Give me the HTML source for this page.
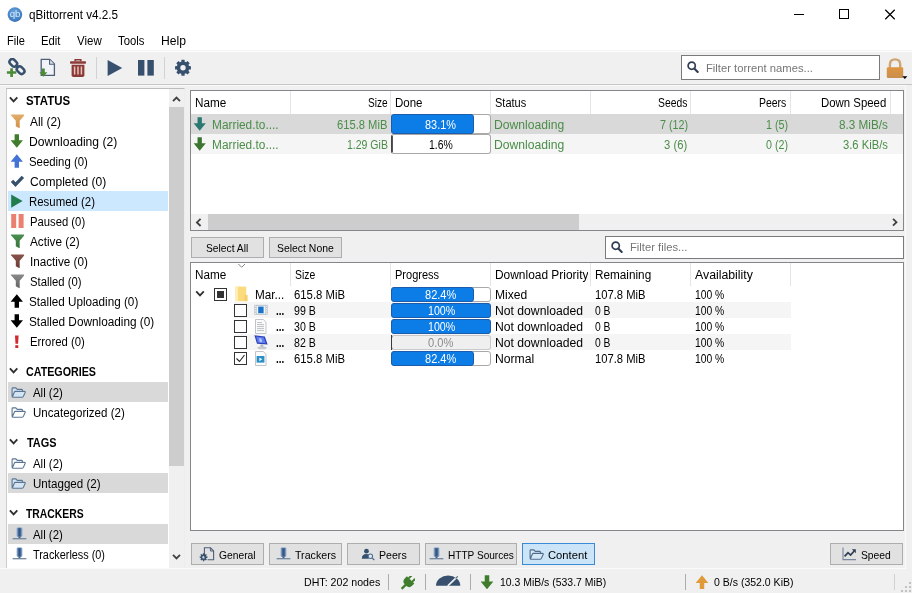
<!DOCTYPE html>
<html lang="en">
<head>
<meta charset="utf-8">
<title>qBittorrent v4.2.5</title>
<style>
html,body{margin:0;padding:0}
body{width:912px;height:593px;overflow:hidden;background:#f0f0f0;position:relative;font-family:"Liberation Sans",sans-serif;color:#000}
div,span,svg{position:absolute;box-sizing:border-box}
#app{left:0;top:0;width:912px;height:593px;will-change:transform}
.x{white-space:nowrap;line-height:16px;height:16px;transform-origin:0 0}
.s{font-size:12px}
.t{font-size:11px}
.b{font-weight:bold}
.clip{overflow:hidden}
#titlebar{left:0;top:0;width:912px;height:51px;background:#fff;border-bottom:1px solid #f3f3f3}
#toolbar{left:0;top:51px;width:912px;height:34px;background:#f0f0f0;border-top:1px solid #fdfdfd;border-bottom:1px solid #c6c6c6}
.tsep{top:57px;width:1px;height:22px;background:#d2d2d2}
#side{left:6px;top:88px;width:179px;height:481px;background:#fff;border:1px solid #cdcdcd;border-top-color:#bdbdbd;border-right-color:#ededed}
.hl{left:8px;width:160px;height:20px;background:#d9d9d9}
.hl.sel{background:#cce8ff}
#vsb{left:169px;top:89px;width:15px;height:479px;background:#f0f0f0}
#vsb i{position:absolute;left:0;top:18px;width:15px;height:359px;background:#cdcdcd}
.panel{background:#fff;border:1px solid #858689}
#main{left:190px;top:90px;width:714px;height:141px}
#files{left:190px;top:262px;width:714px;height:269px}
.hsep{width:1px;background:#e5e5e5}
.row{left:191px;height:20px}
.btn{height:22px;background:#e1e1e1;border:1px solid #adadad}
.btn.on{background:#cce4f7;border-color:#3a8ad6}
.edit{background:#fff;border:1px solid #7a7a7a}
.pb{left:391px;width:100px;border-radius:3px;background:#fff;border:1px solid #a9a9a9}
.pb i{position:absolute;box-sizing:border-box;left:-1px;top:-1px;bottom:-1px;background:#0c7ce6;border:1px solid #1d5cab;border-radius:3px}
.pb.dis{background:#efefef;border-color:#c9c9c9}
.cb{width:13px;height:13px;background:#fff;border:1px solid #333}
.ssep{top:574px;width:1px;height:16px;background:#acacac}
</style>
</head>
<body>
<div id="app">
<!-- title bar + menu -->
<div id="titlebar"></div>
<svg style="left:6px;top:5.5px" width="18" height="18" viewBox="0 0 18 18">
 <defs><radialGradient id="lg" cx="0.45" cy="0.35" r="0.75"><stop offset="0" stop-color="#6aa3dc"/><stop offset="0.65" stop-color="#4583c6"/><stop offset="1" stop-color="#2f63a6"/></radialGradient></defs>
 <circle cx="8.9" cy="8.6" r="7.3" fill="url(#lg)"/>
 <text x="8.9" y="11.3" font-family="Liberation Sans, sans-serif" font-size="9.6" fill="#d6eafb" text-anchor="middle" letter-spacing="-0.1">qb</text>
</svg>
<svg style="left:790px;top:5px" width="110" height="20" viewBox="0 0 110 20" fill="none" stroke="#000" stroke-width="1">
 <path d="M4 9.5h10"/><rect x="49.5" y="4.5" width="9" height="9"/><path d="M95.3 4.800l9.400 9.400M104.700 4.800l-9.400 9.400" stroke-width="1.25"/>
</svg>

<!-- toolbar -->
<div id="toolbar"></div>
<div class="tsep" style="left:96px"></div>
<div class="tsep" style="left:164px"></div>

<!-- sidebar -->
<div id="side"></div>
<div class="hl sel" style="top:191px"></div>
<div class="hl" style="top:382px"></div>
<div class="hl" style="top:473px"></div>
<div class="hl" style="top:524px"></div>
<div id="vsb"><i></i></div>

<!-- main torrent table -->
<div id="main" class="panel"></div>
<div class="row" style="top:114px;width:712px;background:#d9d9d9"></div>
<div class="row" style="top:134px;width:712px;background:#f5f5f5"></div>
<div class="hsep" style="left:290px;top:91px;height:23px"></div>
<div class="hsep" style="left:390px;top:91px;height:23px"></div>
<div class="hsep" style="left:490px;top:91px;height:23px"></div>
<div class="hsep" style="left:590px;top:91px;height:23px"></div>
<div class="hsep" style="left:690px;top:91px;height:23px"></div>
<div class="hsep" style="left:790px;top:91px;height:23px"></div>
<div class="hsep" style="left:890px;top:91px;height:23px"></div>

<div style="left:191px;top:214px;width:712px;height:16px;background:#f0f0f0"></div>
<div style="left:208px;top:214px;width:371px;height:16px;background:#cdcdcd"></div>
<div class="pb" style="top:114px;height:20px"><i style="width:83px"></i></div>
<div class="pb" style="top:134px;height:20px;border-left-color:#444"><i style="left:0;top:1px;bottom:1px;width:1px;background:#555;border:0;border-radius:0"></i></div>

<!-- middle controls -->
<div class="btn" style="left:191px;top:237px;width:73px;height:21px"></div>
<div class="btn" style="left:269px;top:237px;width:73px;height:21px"></div>
<div class="edit" style="left:605px;top:236px;width:299px;height:23px"></div>
<div class="edit" style="left:681px;top:55px;width:199px;height:25px"></div>

<!-- files table -->
<div id="files" class="panel"></div>
<div class="hsep" style="left:290px;top:263px;height:23px"></div>
<div class="hsep" style="left:390px;top:263px;height:23px"></div>
<div class="hsep" style="left:490px;top:263px;height:23px"></div>
<div class="hsep" style="left:590px;top:263px;height:23px"></div>
<div class="hsep" style="left:690px;top:263px;height:23px"></div>
<div class="hsep" style="left:790px;top:263px;height:23px"></div>
<div style="left:234px;top:302px;width:557px;height:16px;background:#f5f5f5"></div>
<div style="left:234px;top:334px;width:557px;height:16px;background:#f5f5f5"></div>
<div class="cb" style="left:214px;top:288px"><div style="left:2px;top:2px;width:7px;height:7px;background:#333"></div></div>
<div class="cb" style="left:234px;top:304px"></div>
<div class="cb" style="left:234px;top:320px"></div>
<div class="cb" style="left:234px;top:336px"></div>
<div class="cb" style="left:234px;top:352px"><svg style="left:0;top:0" width="11" height="11" viewBox="0 0 11 11"><path d="M1.5 5.5l3 3l5-6.5" fill="none" stroke="#222" stroke-width="1.1"/></svg></div>
<div class="pb" style="top:286.5px;height:15px"><i style="width:83px"></i></div>
<div class="pb" style="top:302.5px;height:15px"><i style="width:100px"></i></div>
<div class="pb" style="top:318.5px;height:15px"><i style="width:100px"></i></div>
<div class="pb dis" style="top:334.5px;height:15px;border-left-color:#3a3a3a"><i style="width:1px;background:#3a3a3a;border:0;border-radius:0"></i></div>
<div class="pb" style="top:350.5px;height:15px"><i style="width:83px"></i></div>


<!-- tabs -->
<div class="btn" style="left:191px;top:543px;width:73px"></div>
<div class="btn" style="left:269px;top:543px;width:73px"></div>
<div class="btn" style="left:347px;top:543px;width:73px"></div>
<div class="btn" style="left:425px;top:543px;width:92px"></div>
<div class="btn on" style="left:522px;top:543px;width:73px"></div>
<div class="btn" style="left:830px;top:543px;width:73px"></div>

<!-- status bar -->
<div style="left:0;top:568px;width:906px;height:1px;background:#fafafa"></div>
<div style="left:0;top:85px;width:906px;height:1px;background:#fafafa"></div>
<div style="left:905px;top:85px;width:1px;height:484px;background:#fafafa"></div>
<div class="ssep" style="left:388px"></div>
<div class="ssep" style="left:425px"></div>
<div class="ssep" style="left:470px"></div>
<div class="ssep" style="left:685px"></div>
<div class="ssep" style="left:894px;background:#d0d0d0"></div>

<svg style="left:6px;top:58px" width="20" height="20" viewBox="0 0 20 20">
<g fill="none" stroke="#36506e" stroke-width="2.5">
<rect x="-2.800" y="-4.200" width="5.600" height="8.400" rx="2.800" transform="translate(7.300,4.800) rotate(-45)"/>
<rect x="-2.800" y="-4.200" width="5.600" height="8.400" rx="2.800" transform="translate(14.600,12.200) rotate(-45)"/>
</g>
<path d="M9.400 7l3.200 3.200" stroke="#36506e" stroke-width="2.300"/>
<path d="M0.900 14.500h9.400M5.600 10.200v8.700" stroke="#4b8b36" stroke-width="2.700" fill="none"/></svg>
<svg style="left:38px;top:58px" width="18" height="20" viewBox="0 0 18 20">
<path d="M3.2 1.4h8.6l4.6 4.6v11.4h-13.2z" fill="#f1f3f8" stroke="#4e5e78" stroke-width="1.3" stroke-linejoin="round"/>
<path d="M11.6 1.6v4.6h4.6" fill="#dfe4ee" stroke="#4e5e78" stroke-width="1.1" stroke-linejoin="round"/>
<path d="M4 10.6h2.8v3.6h2.6l-4 4.6l-4-4.6h2.6z" fill="#4b8b36"/>
<path d="M1 17.6h8" stroke="#4b8b36" stroke-width="0"/></svg>
<svg style="left:69px;top:58px" width="18" height="20" viewBox="0 0 18 20">
<path d="M6.2 3.2v-1.4h5.6v1.4" fill="none" stroke="#8a3b37" stroke-width="1.6"/>
<rect x="1" y="3.2" width="16" height="2.6" rx="0.8" fill="#8a3b37"/>
<path d="M2.6 6.8h12.8v10.4q0 1.8-1.8 1.8h-9.2q-1.8 0-1.8-1.8z" fill="#8a3b37"/>
<path d="M5.6 8.6v8M9 8.6v8M12.4 8.6v8" stroke="#e7c2bd" stroke-width="1.5"/></svg>
<svg style="left:106px;top:58px" width="18" height="20" viewBox="0 0 18 20"><path d="M1.6 2v16l14.6-8z" fill="#36506e"/></svg>
<svg style="left:137px;top:58px" width="18" height="20" viewBox="0 0 18 20"><rect x="1" y="2" width="6.4" height="15.6" fill="#36506e"/><rect x="10.4" y="2" width="6.4" height="15.6" fill="#36506e"/></svg>
<svg style="left:174px;top:58px" width="18" height="20" viewBox="0 0 18 20"><path d="M15.06 8.09 L16.94 8.22 L16.94 11.38 L15.06 11.51 L14.50 12.88 L15.73 14.30 L13.50 16.53 L12.08 15.30 L10.71 15.86 L10.58 17.74 L7.42 17.74 L7.29 15.86 L5.92 15.30 L4.50 16.53 L2.27 14.30 L3.50 12.88 L2.94 11.51 L1.06 11.38 L1.06 8.22 L2.94 8.09 L3.50 6.72 L2.27 5.30 L4.50 3.07 L5.92 4.30 L7.29 3.74 L7.42 1.86 L10.58 1.86 L10.71 3.74 L12.08 4.30 L13.50 3.07 L15.73 5.30 L14.50 6.72Z M11.70 9.80 A2.7 2.7 0 1 0 6.30 9.80 A2.7 2.7 0 1 0 11.70 9.80Z" fill="#36506e" fill-rule="evenodd"/></svg>
<svg style="left:687.2px;top:61px" width="12" height="13" viewBox="0 0 12 13"><circle cx="4.700" cy="4.700" r="3.600" fill="none" stroke="#303e54" stroke-width="1.700"/><path d="M7.300 7.500l3.400 3.500" stroke="#303e54" stroke-width="2.100" stroke-linecap="round"/></svg>
<svg style="left:611.2px;top:240.8px" width="12" height="13" viewBox="0 0 12 13"><circle cx="4.700" cy="4.700" r="3.600" fill="none" stroke="#303e54" stroke-width="1.700"/><path d="M7.300 7.500l3.400 3.500" stroke="#303e54" stroke-width="2.100" stroke-linecap="round"/></svg>
<svg style="left:885px;top:56px" width="26" height="24" viewBox="0 0 26 24"><defs><linearGradient id="lk" x1="0" y1="0" x2="0" y2="1"><stop offset="0" stop-color="#df9540"/><stop offset="1" stop-color="#c98f50"/></linearGradient></defs>
<path d="M4.900 12v-3.500q0-5.100 5.150-5.100t5.150 5.100v3.500" fill="none" stroke="#cda673" stroke-width="2.400"/>
<rect x="1.800" y="11.300" width="16.400" height="10.600" rx="1.200" fill="url(#lk)"/>
<path d="M17.200 20.200h5.200l-2.600 2.900z" fill="#000"/></svg>
<svg style="left:9px;top:96.2px" width="10" height="8" viewBox="0 0 10 8"><path d="M0.900 1.300l3.700 4l3.700-4" fill="none" stroke="#303030" stroke-width="1.900"/></svg>
<svg style="left:9px;top:367.3px" width="10" height="8" viewBox="0 0 10 8"><path d="M0.900 1.300l3.700 4l3.700-4" fill="none" stroke="#303030" stroke-width="1.900"/></svg>
<svg style="left:9px;top:438.3px" width="10" height="8" viewBox="0 0 10 8"><path d="M0.900 1.300l3.700 4l3.700-4" fill="none" stroke="#303030" stroke-width="1.900"/></svg>
<svg style="left:9px;top:509.40000000000003px" width="10" height="8" viewBox="0 0 10 8"><path d="M0.900 1.300l3.700 4l3.700-4" fill="none" stroke="#303030" stroke-width="1.900"/></svg>
<svg style="left:10px;top:113.6px" width="15" height="14.6" viewBox="0 0 15 14.6"><defs><linearGradient id="f113" x1="0" y1="0" x2="0" y2="1"><stop offset="0" stop-color="#e3ad6a"/><stop offset="1" stop-color="#cf8f48"/></linearGradient></defs>
<path d="M0.800 1.100q0-.7.700-.7h12q.7 0 .7.700q0 .5-.4 1l-4.100 4.700v7.600l-3.900-2.200v-5.400l-4.100-4.700q-.9-.5-.9-1z" fill="url(#f113)"/></svg>
<svg style="left:10.2px;top:133.6px" width="13.6" height="14" viewBox="0 0 13 14" preserveAspectRatio="none"><path d="M4.4 0.300h4.200v6h3.800l-5.900 7.400l-5.900-7.400h3.800z" fill="#3f7d2c"/></svg>
<svg style="left:10.2px;top:153.6px" width="13.6" height="14" viewBox="0 0 13 14" preserveAspectRatio="none"><path transform="translate(0,14) scale(1,-1)" d="M4.4 0.300h4.200v6h3.800l-5.900 7.400l-5.900-7.400h3.800z" fill="#4373d4"/></svg>
<svg style="left:10px;top:174px" width="15" height="14" viewBox="0 0 15 14"><path d="M2 6.800l3.500 3.800l7.400-7.800" fill="none" stroke="#36506e" stroke-width="3.300"/></svg>
<svg style="left:10px;top:194px" width="14" height="15" viewBox="0 0 14 15"><path d="M1.200 0.400v13.400l11.400-6.700z" fill="#217c4e"/></svg>
<svg style="left:10px;top:213px" width="15" height="16" viewBox="0 0 15 16"><rect x="1.200" y="1" width="5" height="14" fill="#ea806f"/><rect x="8.600" y="1" width="5" height="14" fill="#ea806f"/></svg>
<svg style="left:10px;top:233.6px" width="15" height="14.6" viewBox="0 0 15 14.6"><defs><linearGradient id="f233" x1="0" y1="0" x2="0" y2="1"><stop offset="0" stop-color="#4a8f50"/><stop offset="1" stop-color="#37733d"/></linearGradient></defs>
<path d="M0.800 1.100q0-.7.700-.7h12q.7 0 .7.700q0 .5-.4 1l-4.100 4.700v7.600l-3.900-2.200v-5.400l-4.100-4.700q-.9-.5-.9-1z" fill="url(#f233)"/></svg>
<svg style="left:10px;top:253.6px" width="15" height="14.6" viewBox="0 0 15 14.6"><defs><linearGradient id="f253" x1="0" y1="0" x2="0" y2="1"><stop offset="0" stop-color="#885248"/><stop offset="1" stop-color="#6b3e37"/></linearGradient></defs>
<path d="M0.800 1.100q0-.7.700-.7h12q.7 0 .7.700q0 .5-.4 1l-4.100 4.700v7.600l-3.900-2.200v-5.400l-4.100-4.700q-.9-.5-.9-1z" fill="url(#f253)"/></svg>
<svg style="left:10px;top:273.6px" width="15" height="14.6" viewBox="0 0 15 14.6"><defs><linearGradient id="f273" x1="0" y1="0" x2="0" y2="1"><stop offset="0" stop-color="#8a8a8a"/><stop offset="1" stop-color="#646464"/></linearGradient></defs>
<path d="M0.800 1.100q0-.7.700-.7h12q.7 0 .7.700q0 .5-.4 1l-4.100 4.700v7.600l-3.900-2.200v-5.400l-4.100-4.700q-.9-.5-.9-1z" fill="url(#f273)"/></svg>
<svg style="left:10.2px;top:293.6px" width="13.6" height="14" viewBox="0 0 13 14" preserveAspectRatio="none"><path transform="translate(0,14) scale(1,-1)" d="M4.4 0.300h4.200v6h3.800l-5.900 7.400l-5.900-7.400h3.800z" fill="#000"/></svg>
<svg style="left:10.2px;top:313.6px" width="13.6" height="14" viewBox="0 0 13 14" preserveAspectRatio="none"><path d="M4.4 0.300h4.200v6h3.800l-5.900 7.400l-5.900-7.400h3.800z" fill="#000"/></svg>
<svg style="left:14.2px;top:335px" width="6" height="15" viewBox="0 0 6 15"><path d="M1 0.400h3.600l-.5 8.400h-2.600z" fill="#d02a2e"/><rect x="1.300" y="10.200" width="3" height="2.800" fill="#d02a2e"/></svg>
<svg style="left:11px;top:386.6px" width="16" height="11" viewBox="0 0 16 11"><path d="M1.100 9.300v-7.500q0-.9.900-.9h2.900l1.300 1.500h4.300q.9 0 .9.900v1.100M1.300 10l2-4.800q.3-.8 1.100-.8h9.100q1 0 .7.800l-1.800 4.200q-.3.800-1.100.8h-9.500q-.8 0-.5-.800z" fill="#d3e4f3" stroke="#5a7692" stroke-width="1.100" stroke-linejoin="round"/></svg>
<svg style="left:11px;top:406.6px" width="16" height="11" viewBox="0 0 16 11"><path d="M1.100 9.300v-7.500q0-.9.900-.9h2.900l1.300 1.500h4.300q.9 0 .9.900v1.100M1.300 10l2-4.800q.3-.8 1.100-.8h9.100q1 0 .7.800l-1.800 4.200q-.3.800-1.100.8h-9.500q-.8 0-.5-.800z" fill="#fff" stroke="#5a7692" stroke-width="1.100" stroke-linejoin="round"/></svg>
<svg style="left:11px;top:457.6px" width="16" height="11" viewBox="0 0 16 11"><path d="M1.100 9.300v-7.500q0-.9.900-.9h2.900l1.300 1.500h4.300q.9 0 .9.900v1.100M1.300 10l2-4.800q.3-.8 1.100-.8h9.100q1 0 .7.800l-1.800 4.200q-.3.800-1.100.8h-9.500q-.8 0-.5-.800z" fill="#fff" stroke="#5a7692" stroke-width="1.100" stroke-linejoin="round"/></svg>
<svg style="left:11px;top:477.6px" width="16" height="11" viewBox="0 0 16 11"><path d="M1.100 9.300v-7.500q0-.9.900-.9h2.900l1.300 1.500h4.300q.9 0 .9.900v1.100M1.300 10l2-4.800q.3-.8 1.100-.8h9.100q1 0 .7.800l-1.800 4.200q-.3.800-1.100.8h-9.500q-.8 0-.5-.800z" fill="#d3e4f3" stroke="#5a7692" stroke-width="1.100" stroke-linejoin="round"/></svg>
<svg style="left:11.5px;top:527px" width="16" height="15" viewBox="0 0 16 15"><rect x="4.700" y="0.500" width="5.600" height="9.400" rx="1.300" fill="#7397c2"/>
<rect x="6.300" y="1.200" width="2.400" height="8.200" fill="#36547c"/>
<path d="M7.500 9.600v2.200" stroke="#46638a" stroke-width="2"/>
<path d="M0.600 11.700h13.800" stroke="#71869f" stroke-width="1.300"/></svg>
<svg style="left:11.5px;top:547px" width="16" height="15" viewBox="0 0 16 15"><rect x="4.700" y="0.500" width="5.600" height="9.400" rx="1.300" fill="#7397c2"/>
<rect x="6.300" y="1.200" width="2.400" height="8.200" fill="#36547c"/>
<path d="M7.500 9.600v2.200" stroke="#46638a" stroke-width="2"/>
<path d="M0.600 11.700h13.800" stroke="#71869f" stroke-width="1.300"/></svg>
<svg style="left:171px;top:95px" width="11" height="8" viewBox="0 0 11 8"><path d="M2 6.200l3.500-3.600l3.500 3.600" fill="none" stroke="#404040" stroke-width="1.800"/></svg>
<svg style="left:171px;top:553px" width="11" height="8" viewBox="0 0 11 8"><path d="M2 1.800l3.500 3.600l3.500-3.600" fill="none" stroke="#404040" stroke-width="1.800"/></svg>
<svg style="left:195px;top:217px" width="8" height="11" viewBox="0 0 8 11"><path d="M5.600 1.800l-3.700 3.600l3.700 3.600" fill="none" stroke="#404040" stroke-width="1.800"/></svg>
<svg style="left:891px;top:216.5px" width="8" height="11" viewBox="0 0 8 11"><path d="M2 1.800l3.500 3.400l-3.500 3.400" fill="none" stroke="#404040" stroke-width="1.800"/></svg>
<svg style="left:193.4px;top:117px" width="13.4" height="14" viewBox="0 0 13 14" preserveAspectRatio="none"><path d="M4.4 0.300h4.200v6h3.800l-5.900 7.400l-5.900-7.400h3.800z" fill="#2b7872"/></svg>
<svg style="left:193.4px;top:137px" width="13.4" height="14" viewBox="0 0 13 14" preserveAspectRatio="none"><path d="M4.4 0.300h4.200v6h3.800l-5.900 7.400l-5.900-7.400h3.800z" fill="#3c7530"/></svg>
<svg style="left:237px;top:263px" width="10" height="6" viewBox="0 0 10 6"><path d="M1.400 1l3.300 3.300l3.300-3.300" fill="none" stroke="#858585" stroke-width="1"/></svg>
<svg style="left:195px;top:290px" width="11" height="8" viewBox="0 0 11 8"><path d="M1.200 1.400l3.800 4l3.800-4" fill="none" stroke="#303030" stroke-width="1.800"/></svg>
<svg style="left:235px;top:286px" width="14" height="16" viewBox="0 0 14 16"><path d="M0.400 0.600h10.800v14.600h-10.800z" fill="#fbdb7c"/>
<path d="M0.400 0.600h2.400v14.600h-2.400z" fill="#fff0bf"/>
<path d="M9.400 9h3.200v6.200h-3.200z" fill="#f6cf6b"/></svg>
<svg style="left:254px;top:304px" width="14" height="12" viewBox="0 0 14 12"><rect x="0.300" y="0.800" width="13.400" height="10" fill="#b9c1c9"/>
<rect x="2.600" y="1.800" width="8.800" height="8" fill="#eef3f8"/>
<rect x="4.200" y="2.600" width="5.400" height="6.600" fill="#1b73c9"/>
<path d="M1.400 1.600v8.400M12.600 1.600v8.400" stroke="#fff" stroke-width="0.900" stroke-dasharray="1.200 1.200"/></svg>
<svg style="left:255px;top:319px" width="12" height="15" viewBox="0 0 12 15"><path d="M0.500 0.500h7.800l2.700 2.700v11.300h-10.500z" fill="#fbfbfb" stroke="#b9bdc2" stroke-width="0.900"/>
<path d="M2 3.600h5M2 5.600h7M2 7.600h7M2 9.600h7M2 11.600h7" stroke="#b4b8bd" stroke-width="0.900"/></svg>
<svg style="left:254px;top:334px" width="15" height="16" viewBox="0 0 15 16"><path d="M0.400 1.200l10.400 1.400l2.800 7.800l-10.600 -.6z" fill="#2b3fb4"/>
<path d="M2 2.600l7.800 1l2 5.600l-8-.4z" fill="#5d7df0"/>
<path d="M5 4.200l2.400.4l.8 3.600l-2.400-.2z" fill="#b9c9ff"/>
<path d="M6.400 10.400l2.600.2l.6 2.400h-3z" fill="#b0b4ba"/>
<ellipse cx="8" cy="13.800" rx="4.600" ry="1.500" fill="#c6c9ce"/></svg>
<svg style="left:255px;top:351px" width="12" height="15" viewBox="0 0 12 15"><path d="M0.500 0.500h7.800l2.700 2.700v11.300h-10.500z" fill="#fdfdfd" stroke="#b9bdc2" stroke-width="0.900"/>
<rect x="1.600" y="5" width="7.800" height="6.600" fill="#2a8fc4"/>
<path d="M4.300 6.400v3.800l3-1.900z" fill="#e9f6ff"/></svg>
<svg style="left:199px;top:546px" width="16" height="16" viewBox="0 0 16 16"><path d="M5.400 11.600v-9.800h6.200l3 3v9h-6" fill="none" stroke="#4e5e78" stroke-width="1.100" stroke-linejoin="round"/>
<path d="M11.400 2v3h3" fill="none" stroke="#4e5e78" stroke-width="1"/>
<path d="M7.28 10.39 L8.55 10.54 L8.55 11.86 L7.28 12.01 L7.07 12.52 L7.85 13.53 L6.93 14.45 L5.92 13.67 L5.41 13.88 L5.26 15.15 L3.94 15.15 L3.79 13.88 L3.28 13.67 L2.27 14.45 L1.35 13.53 L2.13 12.52 L1.92 12.01 L0.65 11.86 L0.65 10.54 L1.92 10.39 L2.13 9.88 L1.35 8.87 L2.27 7.95 L3.28 8.73 L3.79 8.52 L3.94 7.25 L5.26 7.25 L5.41 8.52 L5.92 8.73 L6.93 7.95 L7.85 8.87 L7.07 9.88Z M5.90 11.20 A1.3 1.3 0 1 0 3.30 11.20 A1.3 1.3 0 1 0 5.90 11.20Z" fill="#36506e" fill-rule="evenodd"/></svg>
<svg style="left:275.5px;top:547px" width="16" height="15" viewBox="0 0 16 15"><rect x="4.700" y="0.500" width="5.600" height="9.400" rx="1.300" fill="#7397c2"/>
<rect x="6.300" y="1.200" width="2.400" height="8.200" fill="#36547c"/>
<path d="M7.500 9.600v2.200" stroke="#46638a" stroke-width="2"/>
<path d="M0.600 11.700h13.800" stroke="#71869f" stroke-width="1.300"/></svg>
<svg style="left:360.5px;top:547.5px" width="14.5" height="13" viewBox="0 0 17 15"><circle cx="6.400" cy="3.600" r="2.800" fill="#36506e"/>
<path d="M1 12.400q0-5.400 5.400-5.400q3 0 4.400 1.800l-2 3.600z" fill="#36506e"/>
<circle cx="11" cy="9.600" r="2.600" fill="#dfe8f2" stroke="#4f6f92" stroke-width="1.200"/>
<path d="M13 11.600l2.600 2.400" stroke="#4f6f92" stroke-width="1.500"/></svg>
<svg style="left:428.5px;top:547px" width="16" height="15" viewBox="0 0 16 15"><rect x="4.700" y="0.500" width="5.600" height="9.400" rx="1.300" fill="#7397c2"/>
<rect x="6.300" y="1.200" width="2.400" height="8.200" fill="#36547c"/>
<path d="M7.500 9.600v2.200" stroke="#46638a" stroke-width="2"/>
<path d="M0.600 11.700h13.800" stroke="#71869f" stroke-width="1.300"/></svg>
<svg style="left:528.5px;top:548.6px" width="16" height="11" viewBox="0 0 16 11"><path d="M1.100 9.300v-7.500q0-.9.900-.9h2.900l1.300 1.500h4.300q.9 0 .9.900v1.100M1.300 10l2-4.800q.3-.8 1.100-.8h9.100q1 0 .7.800l-1.800 4.200q-.3.800-1.100.8h-9.500q-.8 0-.5-.800z" fill="#d6e8f8" stroke="#4f6c8c" stroke-width="1.100" stroke-linejoin="round"/></svg>
<svg style="left:842px;top:547px" width="15" height="14" viewBox="0 0 15 14"><path d="M1 0.600v12h13" fill="none" stroke="#76879e" stroke-width="1.100"/>
<path d="M2.600 9.400l3.400-3.800l2.600 2.400l3.600-4" fill="none" stroke="#2f3d52" stroke-width="1.700"/><path d="M9.800 2.200h4v4z" fill="#2f3d52"/></svg>
<svg style="left:399.6px;top:575.8px" width="15" height="14" viewBox="0 0 16 15"><g transform="rotate(45 8 7.500)" fill="#3f7d2c">
<rect x="4.300" y="-1.600" width="2.100" height="4.800"/><rect x="9.600" y="-1.600" width="2.100" height="4.800"/>
<path d="M2.400 2.800h11.200v3q0 4.400-4.200 4.800h-2.800q-4.200-.4-4.200-4.800z"/>
<rect x="6.800" y="10" width="2.400" height="6.400"/></g></svg>
<svg style="left:435px;top:574px" width="27" height="14" viewBox="0 0 27 14"><path d="M1 11.800a12.150 10.200 0 0 1 24.300 0z" fill="#36506e"/>
<path d="M13.300 11.300l8.600-8.100" stroke="#f0f0f0" stroke-width="1.700" stroke-linecap="round"/>
<path d="M21 4l1.500-1.400" stroke="#5a6f8a" stroke-width="1.200" stroke-linecap="round"/></svg>
<svg style="left:480px;top:574.6px" width="14" height="14.6" viewBox="0 0 13 14" preserveAspectRatio="none"><path d="M4.4 0.300h4.200v6h3.800l-5.900 7.400l-5.900-7.400h3.800z" fill="#3f7d2c"/></svg>
<svg style="left:695px;top:574.6px" width="14" height="14.6" viewBox="0 0 13 14" preserveAspectRatio="none"><path transform="translate(0,14) scale(1,-1)" d="M4.4 0.300h4.200v6h3.800l-5.900 7.400l-5.900-7.400h3.800z" fill="#e09a3a"/></svg>
<svg style="left:900.5px;top:581.5px" width="10" height="10" viewBox="0 0 10 10"><g fill="#c2c2c2"><rect x="8" y="0" width="2" height="2"/><rect x="4" y="4" width="2" height="2"/><rect x="8" y="4" width="2" height="2"/><rect x="0" y="8" width="2" height="2"/><rect x="4" y="8" width="2" height="2"/><rect x="8" y="8" width="2" height="2"/></g></svg>
<span class="x s" style="left:28.60px;top:7.10px;transform:scaleX(0.9738);">qBittorrent v4.2.5</span>
<span class="x s" style="left:7.00px;top:33.00px;transform:scaleX(0.9202);">File</span>
<span class="x s" style="left:41.30px;top:33.00px;transform:scaleX(0.9426);">Edit</span>
<span class="x s" style="left:77.00px;top:33.00px;transform:scaleX(0.9575);">View</span>
<span class="x s" style="left:118.30px;top:33.00px;transform:scaleX(0.9423);">Tools</span>
<span class="x s" style="left:161.00px;top:33.00px;transform:scaleX(1.0127);">Help</span>
<span class="x s b" style="left:26.00px;top:93.20px;transform:scaleX(0.9520);">STATUS</span>
<span class="x s b" style="left:26.00px;top:364.30px;transform:scaleX(0.8923);">CATEGORIES</span>
<span class="x s b" style="left:26.50px;top:435.30px;transform:scaleX(0.9090);">TAGS</span>
<span class="x s b" style="left:26.30px;top:506.40px;transform:scaleX(0.8654);">TRACKERS</span>
<span class="x s" style="left:30.10px;top:114.00px;transform:scaleX(0.9879);">All (2)</span>
<span class="x s" style="left:29.40px;top:134.00px;transform:scaleX(1.0098);">Downloading (2)</span>
<span class="x s" style="left:29.40px;top:154.00px;transform:scaleX(0.9476);">Seeding (0)</span>
<span class="x s" style="left:30.10px;top:174.00px;transform:scaleX(1.0036);">Completed (0)</span>
<span class="x s" style="left:29.40px;top:194.00px;transform:scaleX(0.9513);">Resumed (2)</span>
<span class="x s" style="left:30.00px;top:214.00px;transform:scaleX(0.9395);">Paused (0)</span>
<span class="x s" style="left:30.10px;top:234.00px;transform:scaleX(0.9782);">Active (2)</span>
<span class="x s" style="left:30.30px;top:254.00px;transform:scaleX(0.9751);">Inactive (0)</span>
<span class="x s" style="left:30.00px;top:274.00px;transform:scaleX(0.9416);">Stalled (0)</span>
<span class="x s" style="left:28.70px;top:294.00px;transform:scaleX(0.9751);">Stalled Uploading (0)</span>
<span class="x s" style="left:28.70px;top:314.00px;transform:scaleX(0.9833);">Stalled Downloading (0)</span>
<span class="x s" style="left:30.30px;top:334.00px;transform:scaleX(0.9454);">Errored (0)</span>
<span class="x s" style="left:33.40px;top:385.10px;transform:scaleX(0.9507);">All (2)</span>
<span class="x s" style="left:33.40px;top:405.10px;transform:scaleX(0.9624);">Uncategorized (2)</span>
<span class="x s" style="left:33.40px;top:456.10px;transform:scaleX(0.9507);">All (2)</span>
<span class="x s" style="left:33.40px;top:476.10px;transform:scaleX(0.9651);">Untagged (2)</span>
<span class="x s" style="left:33.40px;top:527.10px;transform:scaleX(0.9507);">All (2)</span>
<span class="x s" style="left:33.40px;top:547.10px;transform:scaleX(0.9048);">Trackerless (0)</span>
<span class="x s" style="left:194.80px;top:94.90px;transform:scaleX(0.9776);">Name</span>
<span class="x s" style="left:367.70px;top:94.90px;transform:scaleX(0.8396);">Size</span>
<span class="x s" style="left:394.70px;top:94.90px;transform:scaleX(0.9586);">Done</span>
<span class="x s" style="left:494.70px;top:94.90px;transform:scaleX(0.9168);">Status</span>
<span class="x s" style="left:657.50px;top:94.90px;transform:scaleX(0.8610);">Seeds</span>
<span class="x s" style="left:759.40px;top:94.90px;transform:scaleX(0.8706);">Peers</span>
<span class="x s" style="left:821.40px;top:94.90px;transform:scaleX(0.9503);">Down Speed</span>
<span class="x s" style="color:#4a8d48;left:211.70px;top:117.20px;transform:scaleX(0.9887);">Married.to....</span>
<span class="x s" style="color:#4a8d48;left:337.30px;top:117.20px;transform:scaleX(0.9328);">615.8 MiB</span>
<span class="x s" style="color:#4a8d48;left:494.00px;top:117.20px;transform:scaleX(1.0117);">Downloading</span>
<span class="x s" style="color:#4a8d48;left:659.50px;top:117.20px;transform:scaleX(0.8961);">7 (12)</span>
<span class="x s" style="color:#4a8d48;left:765.50px;top:117.20px;transform:scaleX(0.8911);">1 (5)</span>
<span class="x s" style="color:#4a8d48;left:839.00px;top:117.20px;transform:scaleX(0.9777);">8.3 MiB/s</span>
<span class="x s" style="color:#4a8d48;left:211.70px;top:137.20px;transform:scaleX(0.9887);">Married.to....</span>
<span class="x s" style="color:#4a8d48;left:346.80px;top:137.20px;transform:scaleX(0.8757);">1.29 GiB</span>
<span class="x s" style="color:#4a8d48;left:494.00px;top:137.20px;transform:scaleX(1.0117);">Downloading</span>
<span class="x s" style="color:#4a8d48;left:664.40px;top:137.20px;transform:scaleX(0.9397);">3 (6)</span>
<span class="x s" style="color:#4a8d48;left:765.50px;top:137.20px;transform:scaleX(0.8911);">0 (2)</span>
<span class="x s" style="color:#4a8d48;left:843.00px;top:137.20px;transform:scaleX(0.9348);">3.6 KiB/s</span>
<span class="x s" style="color:#fff;left:425.00px;top:117.20px;transform:scaleX(0.9109);">83.1%</span>
<span class="x s" style="left:429.00px;top:137.20px;transform:scaleX(0.8699);">1.6%</span>
<span class="x t" style="left:205.70px;top:239.70px;transform:scaleX(0.9348);">Select All</span>
<span class="x t" style="left:276.50px;top:239.70px;transform:scaleX(0.9477);">Select None</span>
<span class="x t" style="color:#767676;left:706.30px;top:59.90px;transform:scaleX(1.0225);">Filter torrent names...</span>
<span class="x t" style="color:#767676;left:630.00px;top:239.30px;transform:scaleX(1.0225);">Filter files...</span>
<span class="x s" style="left:194.80px;top:267.30px;transform:scaleX(0.9776);">Name</span>
<span class="x s" style="left:295.00px;top:267.30px;transform:scaleX(0.8653);">Size</span>
<span class="x s" style="left:395.00px;top:267.30px;transform:scaleX(0.9182);">Progress</span>
<div class="clip" style="left:494.60px;top:267.30px;width:93.40px;height:16px"><span class="x s" style="left:0;top:0;transform:scaleX(0.9942);">Download Priority</span></div>
<span class="x s" style="left:594.80px;top:267.30px;transform:scaleX(0.9795);">Remaining</span>
<span class="x s" style="left:695.00px;top:267.30px;transform:scaleX(1.0251);">Availability</span>
<span class="x s" style="left:255.25px;top:287.40px;transform:scaleX(0.9762);">Mar...</span>
<span class="x s" style="left:294.40px;top:287.40px;transform:scaleX(0.9439);">615.8 MiB</span>
<span class="x s" style="color:#fff;left:424.95px;top:287.40px;transform:scaleX(0.9197);">82.4%</span>
<span class="x s" style="left:494.50px;top:287.40px;transform:scaleX(1.0073);">Mixed</span>
<span class="x s" style="left:594.50px;top:287.40px;transform:scaleX(0.9346);">107.8 MiB</span>
<span class="x s" style="left:695.00px;top:287.40px;transform:scaleX(0.8610);">100 %</span>
<span class="x s b" style="left:275.80px;top:303.40px;transform:scaleX(0.8187);">...</span>
<span class="x s" style="left:294.40px;top:303.40px;transform:scaleX(0.8830);">99 B</span>
<span class="x s" style="color:#fff;left:427.95px;top:303.40px;transform:scaleX(0.8892);">100%</span>
<span class="x s" style="left:494.50px;top:303.40px;transform:scaleX(1.0146);">Not downloaded</span>
<span class="x s" style="left:594.50px;top:303.40px;transform:scaleX(0.8604);">0 B</span>
<span class="x s" style="left:695.00px;top:303.40px;transform:scaleX(0.8610);">100 %</span>
<span class="x s b" style="left:275.80px;top:319.40px;transform:scaleX(0.8187);">...</span>
<span class="x s" style="left:294.40px;top:319.40px;transform:scaleX(0.8830);">30 B</span>
<span class="x s" style="color:#fff;left:427.95px;top:319.40px;transform:scaleX(0.8892);">100%</span>
<span class="x s" style="left:494.50px;top:319.40px;transform:scaleX(1.0146);">Not downloaded</span>
<span class="x s" style="left:594.50px;top:319.40px;transform:scaleX(0.8604);">0 B</span>
<span class="x s" style="left:695.00px;top:319.40px;transform:scaleX(0.8610);">100 %</span>
<span class="x s b" style="left:275.80px;top:335.40px;transform:scaleX(0.8187);">...</span>
<span class="x s" style="left:294.40px;top:335.40px;transform:scaleX(0.8830);">82 B</span>
<span class="x s" style="color:#8c8c8c;left:428.00px;top:335.40px;transform:scaleX(0.9284);">0.0%</span>
<span class="x s" style="left:494.50px;top:335.40px;transform:scaleX(1.0146);">Not downloaded</span>
<span class="x s" style="left:594.50px;top:335.40px;transform:scaleX(0.8604);">0 B</span>
<span class="x s" style="left:695.00px;top:335.40px;transform:scaleX(0.8610);">100 %</span>
<span class="x s b" style="left:275.80px;top:351.40px;transform:scaleX(0.8187);">...</span>
<span class="x s" style="left:294.40px;top:351.40px;transform:scaleX(0.9439);">615.8 MiB</span>
<span class="x s" style="color:#fff;left:424.95px;top:351.40px;transform:scaleX(0.9197);">82.4%</span>
<span class="x s" style="left:494.50px;top:351.40px;transform:scaleX(1.0149);">Normal</span>
<span class="x s" style="left:594.50px;top:351.40px;transform:scaleX(0.9346);">107.8 MiB</span>
<span class="x s" style="left:695.00px;top:351.40px;transform:scaleX(0.8610);">100 %</span>
<span class="x t" style="left:218.70px;top:546.70px;transform:scaleX(0.9351);">General</span>
<span class="x t" style="left:294.60px;top:546.70px;transform:scaleX(0.9676);">Trackers</span>
<span class="x t" style="left:379.00px;top:546.70px;transform:scaleX(0.9635);">Peers</span>
<span class="x t" style="left:447.50px;top:546.70px;transform:scaleX(0.9161);">HTTP Sources</span>
<span class="x t" style="left:548.40px;top:546.70px;transform:scaleX(1.0200);">Content</span>
<span class="x t" style="left:860.80px;top:546.70px;transform:scaleX(0.9367);">Speed</span>
<span class="x t" style="left:304.00px;top:574.00px;transform:scaleX(0.9659);">DHT: 202 nodes</span>
<span class="x t" style="left:500.10px;top:574.00px;transform:scaleX(0.9493);">10.3 MiB/s (533.7 MiB)</span>
<span class="x t" style="left:713.50px;top:574.00px;transform:scaleX(0.9560);">0 B/s (352.0 KiB)</span>
</div>
</body>
</html>
